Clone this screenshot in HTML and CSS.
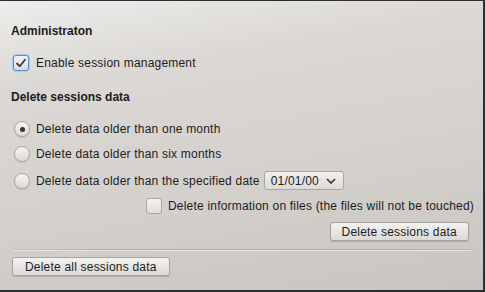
FILE: index.html
```html
<!DOCTYPE html>
<html lang="en">
<head>
    <meta charset="UTF-8">
    <title>Session settings</title>
    <link rel="stylesheet" href="styles.css">
</head>
<body>

<div class="panel">
    <h2 class="section-title">Administraton</h2>
    <label class="check-row">
        <span class="checkbox checked">
            <svg viewBox="0 0 16 16" width="16" height="16"><path d="M4 8.5 L6.8 11.2 L12 4.8" fill="none" stroke="#3a3a3a" stroke-width="1.8" stroke-linecap="round" stroke-linejoin="round"/></svg>
        </span>
        <span>Enable session management</span>
    </label>

    <h2 class="section-title second">Delete sessions data</h2>
    <div class="radio-list">
        <label class="radio-row"><span class="radio selected"></span><span>Delete data older than one month</span></label>
        <label class="radio-row"><span class="radio"></span><span>Delete data older than six months</span></label>
        <label class="radio-row">
            <span class="radio"></span><span>Delete data older than the specified date</span>
            <span class="combo">01/01/00
                <svg viewBox="0 0 10 6" width="10" height="6"><path d="M1 1 L5 5 L9 1" fill="none" stroke="#333" stroke-width="1.6"/></svg>
            </span>
        </label>
    </div>

    <label class="check-row files-row">
        <span class="checkbox"></span>
        <span>Delete information on files (the files will not be touched)</span>
    </label>

    <div class="actions">
        <button class="btn">Delete sessions data</button>
    </div>

    <div class="separator"></div>

    <div class="footer">
        <button class="btn">Delete all sessions data</button>
    </div>
</div>

</body>
</html>
```

FILE: styles.css
```css
body {
    margin: 0;
    font-family: "Liberation Sans", Arial, sans-serif;
    font-size: 12px;
    letter-spacing: 0.2px;
    color: #1c1c1c;
}

.panel {
    box-sizing: border-box;
    width: 485px;
    height: 292px;
    border-top: 1px solid #2e2e2e;
    border-right: 2px solid #2e2e2e;
    border-bottom: 2px solid #2e2e2e;
    background: linear-gradient(170deg, #eeedeb 0%, #dad7d4 25%, #d4d1cd 60%, #c8c4c0 100%);
    padding: 22px 12px 0 11px;
    display: flex;
    flex-direction: column;
    white-space: nowrap;
}

.section-title {
    margin: 0;
    font-size: 12px;
    font-weight: bold;
    line-height: 16px;
    letter-spacing: 0;
}

.section-title.second {
    margin-top: 18px;
}

.check-row,
.radio-row {
    display: flex;
    align-items: center;
    gap: 7px;
    line-height: 16px;
}

.check-row {
    margin-top: 16px;
    padding-left: 2px;
}

.checkbox {
    box-sizing: border-box;
    flex: none;
    width: 16px;
    height: 16px;
    border: 1px solid #a9a6a2;
    border-radius: 3px;
    background: linear-gradient(#f4f3f2, #dedcd9);
    display: flex;
}

.checkbox.checked {
    border: 1px solid #4a90d9;
    box-shadow: 0 0 0 1px #a8cdf0;
}

.checkbox.checked svg {
    margin: -1px;
}

.radio-list {
    margin-top: 16px;
    display: flex;
    flex-direction: column;
    gap: 9px;
}

.radio-row {
    padding-left: 3px;
    gap: 6px;
}

.radio {
    box-sizing: border-box;
    flex: none;
    width: 16px;
    height: 16px;
    border: 1px solid #aaa7a3;
    border-radius: 50%;
    background: linear-gradient(#f5f4f3, #dcdad7);
    box-shadow: 0 1px 1px rgba(0, 0, 0, 0.12);
    display: flex;
    align-items: center;
    justify-content: center;
}

.radio.selected::after {
    content: "";
    width: 5px;
    height: 5px;
    border-radius: 50%;
    background: #333;
}

.combo {
    box-sizing: border-box;
    margin-left: -2px;
    height: 19px;
    width: 80px;
    border: 1px solid #aba8a4;
    border-radius: 3px;
    background: linear-gradient(#f1f0ef, #dddad7);
    display: flex;
    align-items: center;
    justify-content: space-between;
    padding: 0 7px 0 6px;
}

.files-row {
    margin-top: 8px;
    padding-left: 135px;
    gap: 6px;
}

.actions {
    display: flex;
    justify-content: flex-end;
    margin-top: 8px;
    padding-right: 2px;
}

.btn {
    box-sizing: border-box;
    font-family: inherit;
    font-size: 12px;
    letter-spacing: 0.2px;
    color: #1c1c1c;
    height: 19px;
    padding: 0 11px;
    border: 1px solid #a6a29e;
    border-radius: 3px;
    background: linear-gradient(#f3f2f1, #dcd9d6);
    box-shadow: 0 1px 1px rgba(0, 0, 0, 0.15);
    white-space: nowrap;
}

.separator {
    margin-top: 8px;
    margin-left: 2px;
    height: 1px;
    background: linear-gradient(90deg, rgba(160, 156, 152, 0.3), #b3afab 20%, #b3afab 90%, rgba(160, 156, 152, 0.4));
    border-bottom: 1px solid #e6e4e1;
}

.footer {
    margin-top: 6px;
    display: flex;
}

.footer .btn {
    margin-left: 1px;
    padding: 0 12px;
}
```
